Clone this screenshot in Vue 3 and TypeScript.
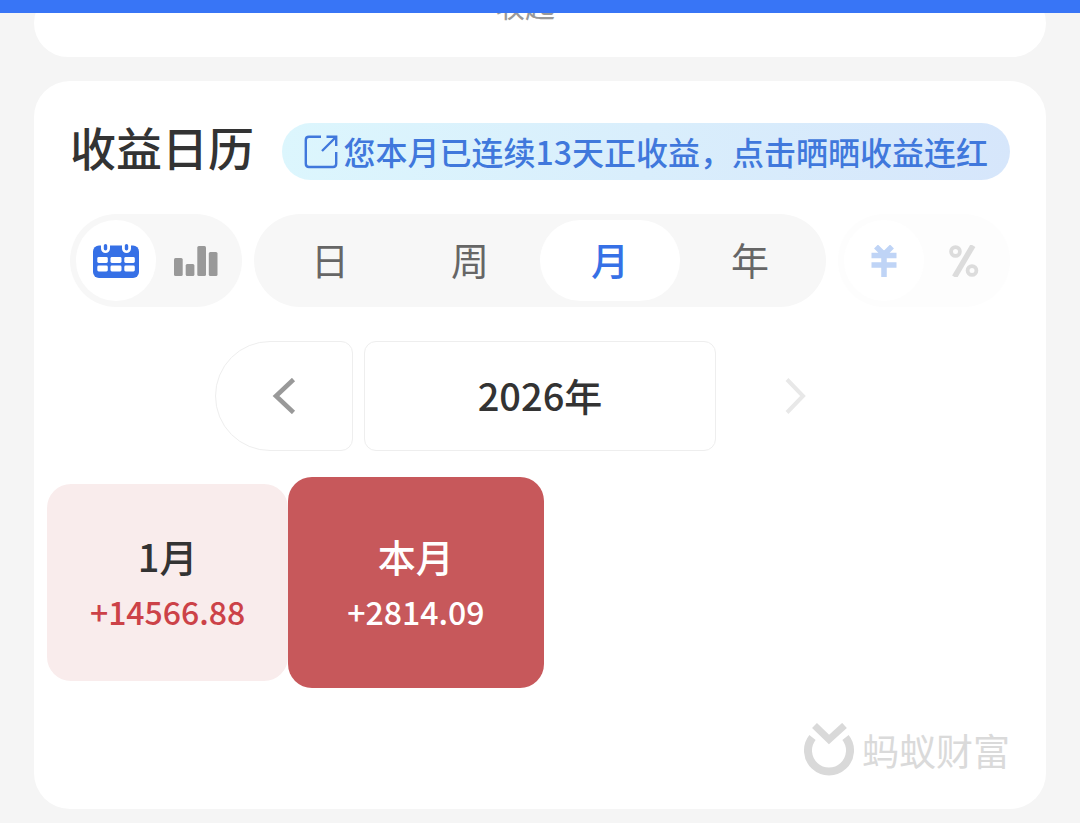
<script setup lang="ts">
import { ref } from 'vue'

type View = 'calendar' | 'chart'

interface MonthCell {
  label: string
  amount: string
  current: boolean
}

const periods: string[] = ['日', '周', '月', '年']
const period = ref<string>('月')
const view = ref<View>('calendar')
const year = ref<number>(2026)

const months: MonthCell[] = [
  { label: '1月', amount: '+14566.88', current: false },
  { label: '本月', amount: '+2814.09', current: true },
]
</script>

<template>
  <div class="page">
    <div class="topbar"></div>

    <section class="card summary">
      <button type="button" class="collapse">收起</button>
    </section>

    <main class="card earnings">
      <header class="head">
        <h1 class="title">收益日历</h1>
        <a class="banner" href="#">
          <svg class="share" viewBox="0 0 34 34" fill="none" stroke="currentColor" stroke-width="2.4">
            <path d="M17 1.8H5Q1.8 1.8 1.8 5V28.800Q1.8 32 5 32H29Q32.200 32 32.200 28.800V17" />
            <path d="M18 16L31.500 2.500M22.500 1.800H32.200V11" />
          </svg>
          <span>您本月已连续13天正收益，点击晒晒收益连红</span>
        </a>
      </header>

      <div class="controls">
        <div class="group toggle">
          <button type="button" class="seg" :class="{ on: view === 'calendar' }" aria-label="日历" @click="view = 'calendar'">
            <svg width="46" height="34" viewBox="0 0 46 34">
              <rect x="0" y="1.500" width="46" height="32.500" rx="6" fill="#3670e6" />
              <path d="M8 0V4.500a4.500 4.500 0 0 0 9 0V0zM29 0V4.500a4.500 4.500 0 0 0 9 0V0z" fill="#fff" />
              <rect x="10.800" y="0" width="3.400" height="6.500" rx="1.700" fill="#3670e6" />
              <rect x="31.800" y="0" width="3.400" height="6.500" rx="1.700" fill="#3670e6" />
              <g fill="#fff">
                <rect x="4.300" y="13" width="10.500" height="6" rx="1.400" />
                <rect x="17.500" y="13" width="11" height="6" rx="1.400" />
                <rect x="31.300" y="13" width="10.500" height="6" rx="1.400" />
                <rect x="4.300" y="21.500" width="10.500" height="6" rx="1.400" />
                <rect x="17.500" y="21.500" width="11" height="6" rx="1.400" />
                <rect x="31.300" y="21.500" width="10.500" height="6" rx="1.400" />
              </g>
            </svg>
          </button>
          <button type="button" class="seg" :class="{ on: view === 'chart' }" aria-label="图表" @click="view = 'chart'">
            <svg width="44" height="30" viewBox="0 0 44 30" fill="#999">
              <rect x="0" y="12" width="8.700" height="18" rx="1.500" />
              <rect x="11.700" y="18" width="8.700" height="12" rx="1.500" />
              <rect x="23.300" y="0" width="8.700" height="30" rx="1.500" />
              <rect x="34.800" y="6" width="8.700" height="24" rx="1.500" />
            </svg>
          </button>
        </div>

        <div class="group periods">
          <button
            v-for="p in periods"
            :key="p"
            type="button"
            class="seg"
            :class="{ on: period === p }"
            @click="period = p"
          >{{ p }}</button>
        </div>

        <div class="group toggle faded">
          <button type="button" class="seg on" aria-label="金额" disabled>
            <svg width="26" height="32" viewBox="0 0 26 32" fill="none" stroke="#bfd4f6" stroke-width="5.500">
              <path d="M5 1.500L13 9.500L21 1.500M0.500 10.500H25.500M0.500 20H25.500M13 9V32" />
            </svg>
          </button>
          <button type="button" class="seg" aria-label="百分比" disabled>
            <svg width="30" height="32" viewBox="0 0 30 32" fill="none" stroke="#dcdcdc">
              <circle cx="6.500" cy="6.500" r="4.400" stroke-width="3.800" />
              <circle cx="23" cy="25.500" r="4.400" stroke-width="3.800" />
              <path d="M24 0.500L5.500 32" stroke-width="5.500" />
            </svg>
          </button>
        </div>
      </div>

      <nav class="years">
        <button type="button" class="prev" aria-label="上一年" @click="year--">
          <svg width="24" height="36" viewBox="0 0 24 36" fill="none" stroke="#999" stroke-width="4.600">
            <path d="M21.500 1.500L4 18L21.500 34.500" />
          </svg>
        </button>
        <button type="button" class="current-year">{{ year }}年</button>
        <button type="button" class="next" aria-label="下一年" disabled>
          <svg width="24" height="36" viewBox="0 0 24 36" fill="none" stroke="#e8e8e8" stroke-width="4">
            <path d="M3 1.500L19 18L3 34.500" />
          </svg>
        </button>
      </nav>

      <div class="months">
        <button
          v-for="m in months"
          :key="m.label"
          type="button"
          class="month"
          :class="{ current: m.current }"
        >
          <span class="label">{{ m.label }}</span>
          <span class="amount">{{ m.amount }}</span>
        </button>
      </div>

      <footer class="brand">
        <svg width="50" height="54" viewBox="0 0 50 54" fill="none" stroke="#d9d9d9" stroke-width="8">
          <path d="M8.500 14.500A21 21 0 1 0 41.500 14.500" />
          <path d="M10.500 2.500L25 16.500L40.500 2.500" stroke-width="7" />
        </svg>
        <span>蚂蚁财富</span>
      </footer>
    </main>
  </div>
</template>

<style>
body {
  background: #f5f5f5;
}
</style>

<style scoped>
.page {
  font-family: "Noto Sans CJK SC", sans-serif;
  color: #333;
  padding-bottom: 14px;
}

button {
  font: inherit;
  color: inherit;
  background: none;
  border: 0;
  margin: 0;
  padding: 0;
}

svg {
  display: block;
  flex: none;
}

.topbar {
  position: relative;
  z-index: 1;
  height: 13px;
  background: #3875f6;
}

.card {
  margin: 0 34px;
  background: #fff;
  border-radius: 36px;
}

.summary {
  margin-top: -24px;
  padding: 0 30px 38px 0;
  display: flex;
  justify-content: center;
}

.collapse {
  font-size: 30px;
  line-height: 30px;
  color: #999;
}

.earnings {
  margin-top: 24px;
  padding: 42px 36px 32px;
}

.head {
  display: flex;
  align-items: flex-start;
  justify-content: space-between;
}

.title {
  margin: 0;
  font-size: 46px;
  line-height: 46px;
  font-weight: 500;
  white-space: nowrap;
}

.banner {
  display: flex;
  align-items: center;
  gap: 6px;
  padding: 0 22px;
  font-size: 32px;
  line-height: 57px;
  font-weight: 500;
  border-radius: 29px;
  white-space: nowrap;
  color: #4078dc;
  text-decoration: none;
  background: linear-gradient(100deg, #dcf6fd, #d6e6fb);
}

.share {
  width: 34px;
  height: 34px;
}

.controls {
  display: flex;
  gap: 12px;
  margin-top: 34px;
}

.group {
  display: flex;
  padding: 6px;
  border-radius: 47px;
  background: #f7f7f7;
}

.toggle {
  flex: 0 0 160px;
}

.periods {
  flex: 1;
}

.periods .seg {
  padding-bottom: 4px;
}

.faded {
  background: #fdfdfd;
}

.seg {
  flex: 1;
  display: flex;
  align-items: center;
  justify-content: center;
  box-sizing: border-box;
  height: 81px;
  border-radius: 41px;
  font-size: 38px;
  color: #666;
}

.seg.on {
  background: #fff;
  color: #3670e6;
  font-weight: 500;
}

.years {
  display: flex;
  justify-content: center;
  gap: 11px;
  margin-top: 34px;
}

.years button {
  display: flex;
  align-items: center;
  justify-content: center;
  box-sizing: border-box;
  height: 110px;
  border: 1px solid #eee;
  border-radius: 12px;
}

.years .prev,
.years .next {
  width: 138px;
}

.years .prev {
  border-radius: 55px 12px 12px 55px;
}

.years .next {
  border-color: transparent;
}

.years .current-year {
  width: 352px;
  padding-bottom: 4px;
  font-size: 38px;
  font-weight: 500;
}

.months {
  display: grid;
  grid-template-columns: repeat(4, 1fr);
  gap: 7px;
  margin: 33px -23px 0;
}

.month {
  display: flex;
  flex-direction: column;
  align-items: center;
  padding: 44px 0 43px;
  border-radius: 24px;
  background: #f9ecec;
}

.month.current {
  margin: -7px;
  padding: 51px 0 50px;
  background: #c7585b;
  color: #fff;
}

.label {
  font-size: 38px;
  line-height: 56px;
  font-weight: 500;
}

.amount {
  font-size: 32px;
  line-height: 54px;
  font-weight: 500;
  color: #cc4248;
}

.current .amount {
  color: #fff;
}

.brand {
  display: flex;
  align-items: center;
  justify-content: flex-end;
  gap: 8px;
  margin-top: 42px;
  font-size: 37px;
  line-height: 54px;
  color: #dadada;
}
</style>
